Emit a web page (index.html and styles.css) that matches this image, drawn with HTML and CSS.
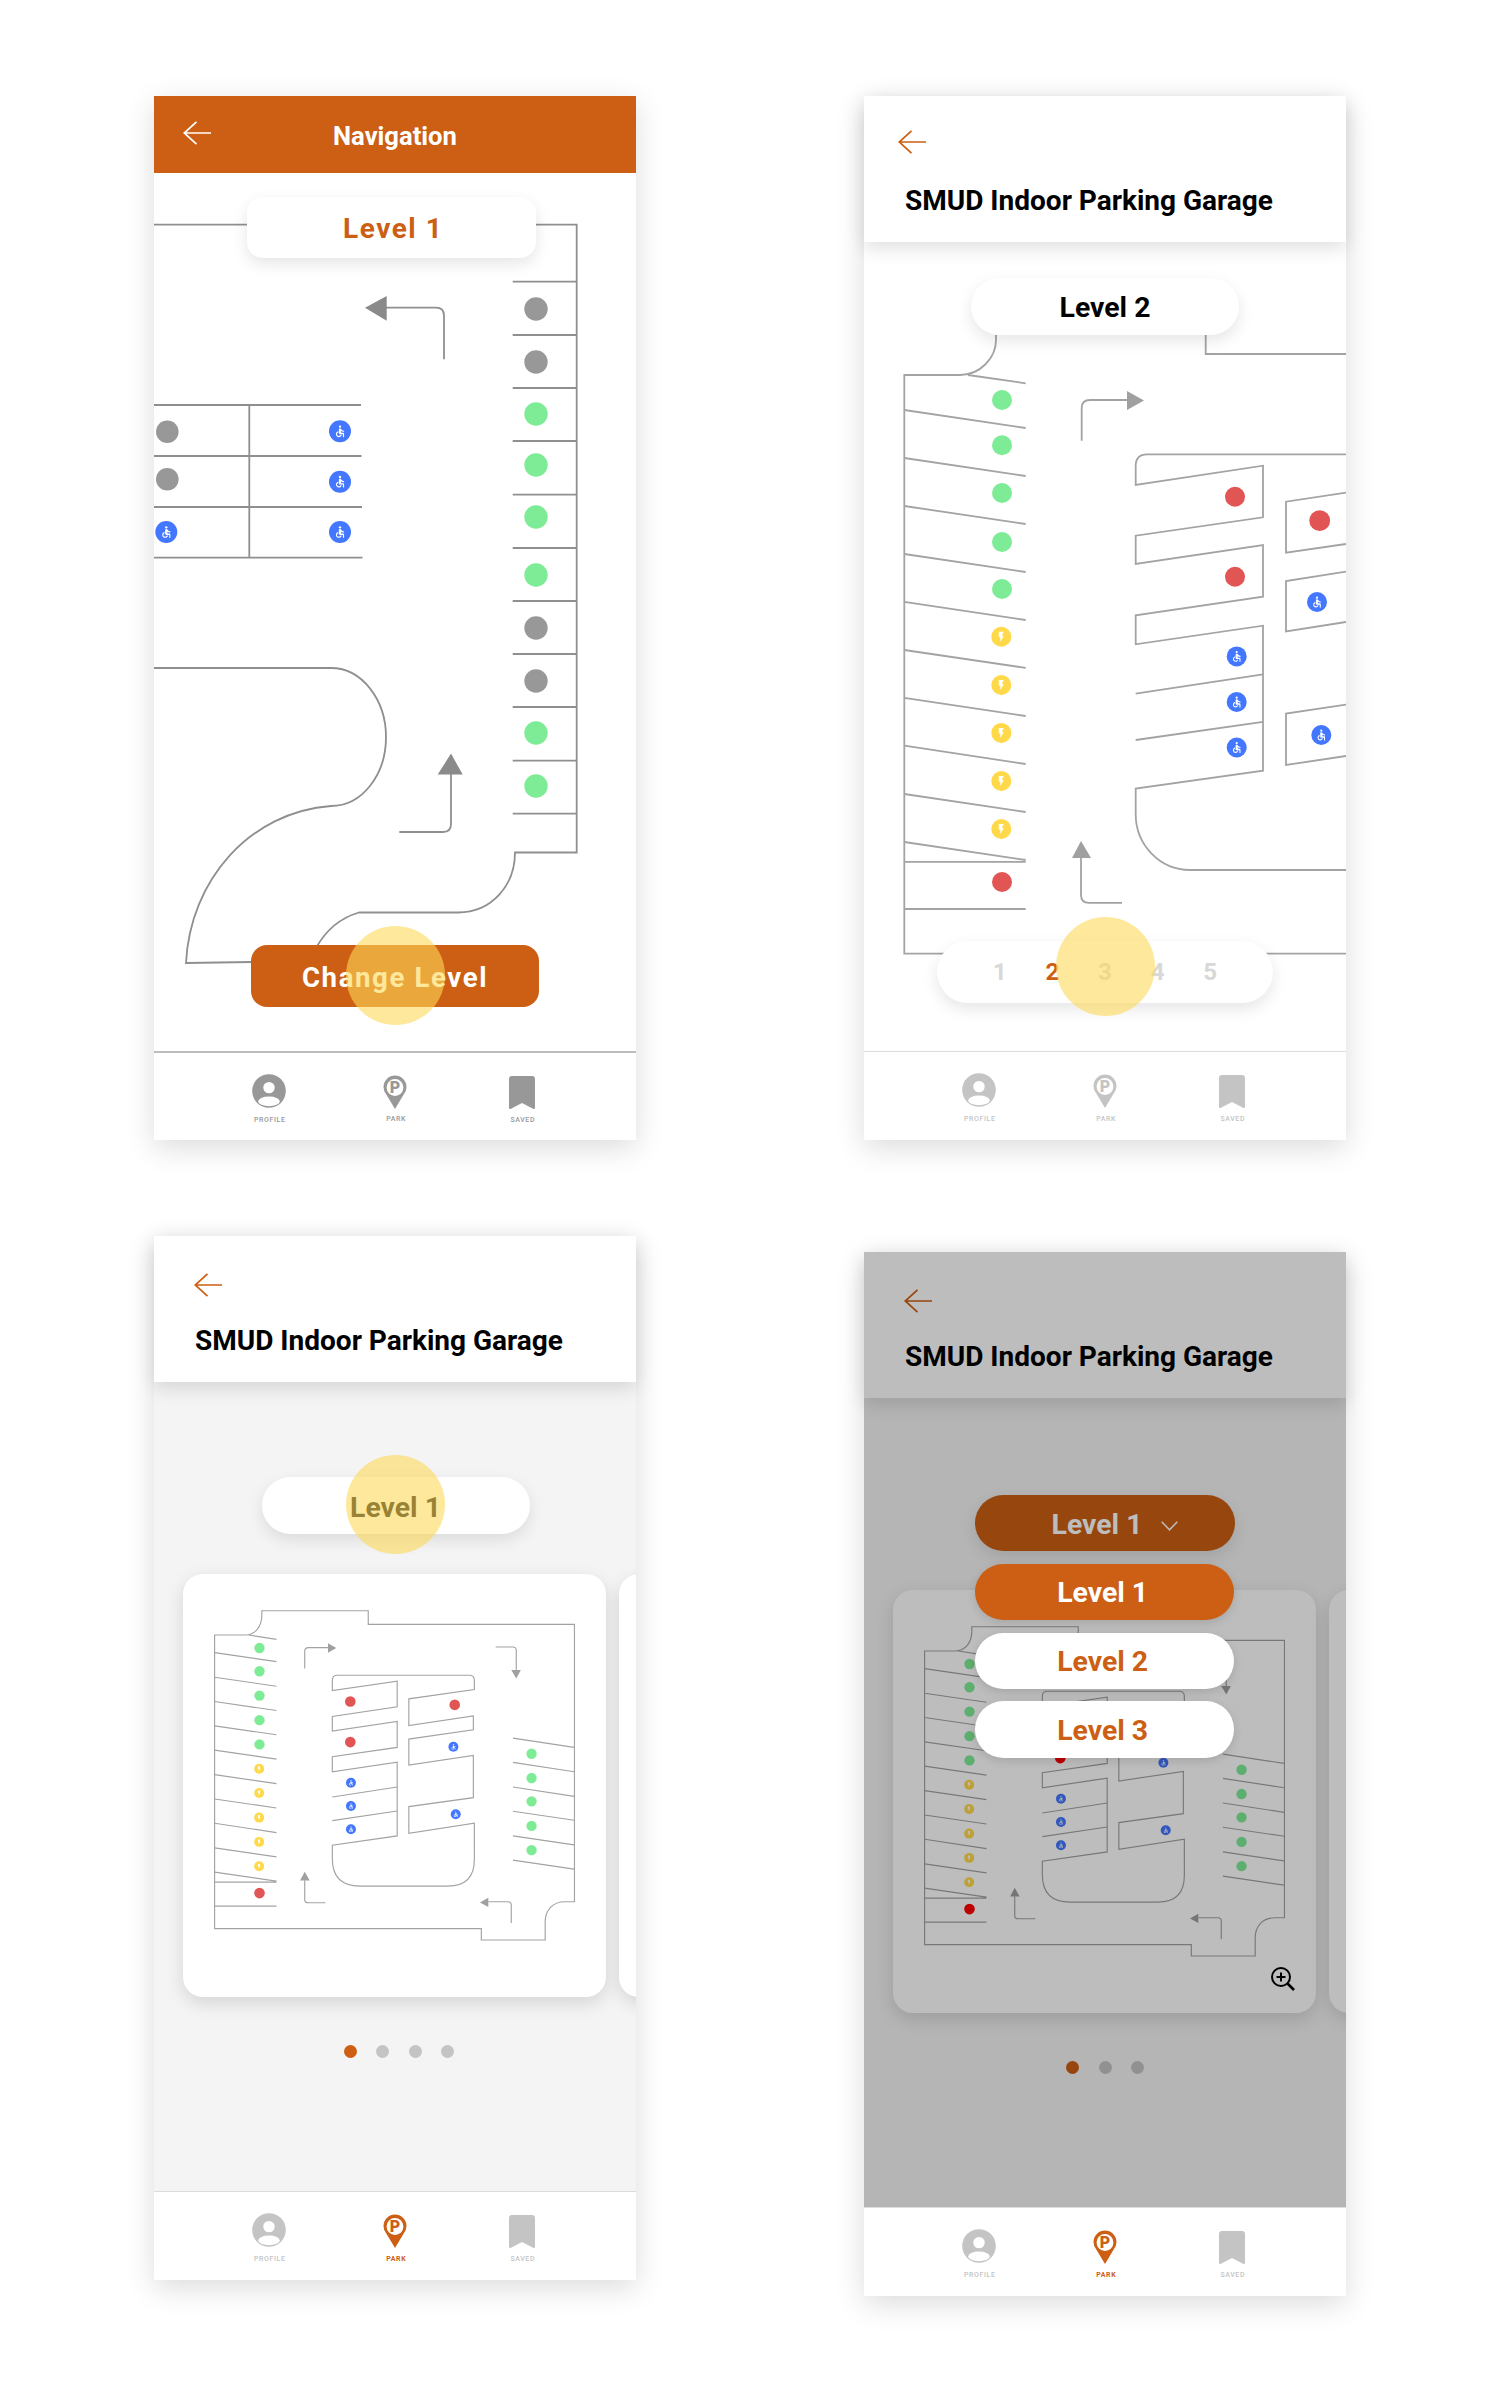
FILE: index.html
```html
<!DOCTYPE html>
<html lang="en">
<head>
<meta charset="utf-8">
<title>SMUD Indoor Parking Garage</title>
<link rel="stylesheet" href="styles.css">
</head>
<body>
<svg class="defs" width="0" height="0" aria-hidden="true">
  <defs>
    <symbol id="g-wc" viewBox="0 0 24 24">
      <circle cx="12" cy="4" r="2"/>
      <path d="M19 13v-2c-1.54.02-3.09-.75-4.07-1.83l-1.29-1.43c-.17-.19-.38-.34-.61-.45-.01 0-.01-.01-.02-.01H13c-.35-.2-.75-.3-1.19-.26C10.76 7.11 10 8.04 10 9.09V15c0 1.1.9 2 2 2h5v5h2v-5.5c0-1.1-.9-2-2-2h-3v-3.45c1.29 1.07 3.25 1.94 5 1.95zm-6.17 5c-.41 1.16-1.52 2-2.83 2-1.66 0-3-1.34-3-3 0-1.31.84-2.41 2-2.83V12.1c-2.28.46-4 2.48-4 4.9 0 2.76 2.24 5 5 5 2.42 0 4.44-1.72 4.9-4h-2.07z"/>
    </symbol>
    <symbol id="g-bolt" viewBox="0 0 24 24">
      <path d="M7 2v11h3v9l7-12h-4l4-8z"/>
    </symbol>
    <symbol id="i-back" viewBox="0 0 28 24">
      <path d="M13.5 .8 1.2 12l12.3 11.2M1.2 12H28" fill="none" stroke="currentColor" stroke-width="1.7"/>
    </symbol>
    <symbol id="i-profile" viewBox="0 0 36 36">
      <circle cx="18" cy="17" r="16.8" fill="currentColor"/>
      <circle cx="18" cy="13.6" r="5.7" fill="#fff"/>
      <ellipse cx="18" cy="27.4" rx="10.8" ry="4.8" fill="#fff"/>
    </symbol>
    <symbol id="i-saved" viewBox="0 0 26 36">
      <path d="M3 2h20q3 0 3 3v29q0 1.3-1.5 1L13 29 1.5 35Q0 35.3 0 34V5q0-3 3-3z" fill="currentColor"/>
    </symbol>

    <symbol id="mini-map" viewBox="38 12 1270 1270">
      <g class="m-line">
        <path d="M133 195V1078H935V1112H1127V1058C1127 1022 1150 997 1187 997H1215V163H595V122H275V135C275 170 255 195 225 195Z"/>
        <path d="M235 195 319 208M133 248 319 275M133 322 319 349M133 395 319 422M133 468 319 495M133 541 319 568M133 615 319 642M133 688 319 715M133 761 319 789M133 835 319 862M133 908 319 935M133 938H319M133 1010H319"/>
        <path d="M487 362V331Q487 316 502 316H899Q914 316 914 331V359L717 387V467L911 438V480L717 508V586L911 557V684L717 711V791L914 761V870Q914 950 834 950H570Q487 950 487 868V827L682 799V577L487 606V561L682 533V455L487 484V440L682 411V334Z"/>
        <path d="M487 682 682 652M487 753 682 724"/>
        <path d="M1030 505 1214 533M1030 578 1214 606M1030 652 1214 680M1030 725 1214 752M1030 799 1214 826M1030 872 1214 899"/>
        <path d="M404 296V244Q404 233 415 233H475M978 231H1030Q1040 231 1040 241V300M466 1000H414Q404 1000 404 990V932M1025 1061V1007Q1025 997 1015 997H956"/>
      </g>
      <path class="m-arrow" d="M474 220V248L499 234ZM1025 300H1054L1040 326ZM390 933H419L404 907ZM956 985V1013L931 999Z"/>
      <g class="d-green">
        <circle cx="268" cy="234" r="15.5"/><circle cx="268" cy="304" r="15.5"/><circle cx="268" cy="377" r="15.5"/><circle cx="268" cy="451" r="15.5"/><circle cx="268" cy="524" r="15.5"/>
        <circle cx="1086" cy="552" r="15.5"/><circle cx="1086" cy="625" r="15.5"/><circle cx="1086" cy="695" r="15.5"/><circle cx="1086" cy="769" r="15.5"/><circle cx="1086" cy="842" r="15.5"/>
      </g>
      <g class="d-red">
        <circle cx="268" cy="971" r="16"/><circle cx="541" cy="395" r="16"/><circle cx="541" cy="517" r="16"/><circle cx="855" cy="405" r="16"/>
      </g>
      <g class="d-yellow">
        <circle cx="267" cy="597" r="15"/><circle cx="267" cy="670" r="15"/><circle cx="267" cy="744" r="15"/><circle cx="267" cy="817" r="15"/><circle cx="267" cy="890" r="15"/>
      </g>
      <g class="d-glyph">
        <use href="#g-bolt" x="258" y="588" width="18" height="18"/><use href="#g-bolt" x="258" y="661" width="18" height="18"/><use href="#g-bolt" x="258" y="735" width="18" height="18"/><use href="#g-bolt" x="258" y="808" width="18" height="18"/><use href="#g-bolt" x="258" y="881" width="18" height="18"/>
      </g>
      <g class="d-blue">
        <circle cx="543" cy="639" r="15"/><circle cx="543" cy="709" r="15"/><circle cx="543" cy="779" r="15"/><circle cx="851" cy="531" r="15"/><circle cx="858" cy="734" r="15"/>
      </g>
      <g class="d-glyph">
        <use href="#g-wc" x="533" y="629" width="20" height="20"/><use href="#g-wc" x="533" y="699" width="20" height="20"/><use href="#g-wc" x="533" y="769" width="20" height="20"/><use href="#g-wc" x="841" y="521" width="20" height="20"/><use href="#g-wc" x="848" y="724" width="20" height="20"/>
      </g>
    </symbol>
  </defs>
</svg>

<main class="board">

  <!-- Screen 1: navigation -->
  <section class="phone">
    <div class="screen">
      <header class="head head-orange">
        <svg class="back back-one"><use href="#i-back"/></svg>
        <h1 class="head-title">Navigation</h1>
      </header>
      <div class="stage">
        <svg class="map" viewBox="154 173 482 878">
          <g class="m-line big">
            <path d="M154 224.7H576.7V852.5H515C515 885 492 912.5 458 912.5H359C340 918 326 930 316 948"/>
            <path d="M512.7 281.7H576.7M512.7 335H576.7M512.7 388H576.7M512.7 441H576.7M512.7 494.7H576.7M512.7 548H576.7M512.7 601H576.7M512.7 654H576.7M512.7 707H576.7M512.7 760.7H576.7M512.7 813.6H576.7"/>
            <path d="M154 405H361M154 456H361.5M154 507H362M154 557.7H362.5M249.3 405V557.7"/>
            <path d="M154 668H331C362 668 386 700 386 737C386 775 362 806 331 806C250 812 190 880 186 963L252 962"/>
            <path d="M444 359.3V315.7Q444 307.7 436 307.7H386M399.3 832H443Q451 832 451 824V774"/>
          </g>
          <path class="m-arrow dark" d="M365 307.7 386.7 296V320.7ZM451 753.6 437.7 774.5H462.7Z"/>
          <g class="d-gray">
            <circle cx="536" cy="309" r="11.7"/><circle cx="536" cy="362" r="11.7"/><circle cx="536" cy="628" r="11.7"/><circle cx="536" cy="681" r="11.7"/>
            <circle cx="167.3" cy="431.7" r="11.3"/><circle cx="167.3" cy="479.3" r="11.3"/>
          </g>
          <g class="d-green">
            <circle cx="536" cy="414" r="11.7"/><circle cx="536" cy="465" r="11.7"/><circle cx="536" cy="517" r="11.7"/><circle cx="536" cy="575" r="11.7"/><circle cx="536" cy="733" r="11.7"/><circle cx="536" cy="786" r="11.7"/>
          </g>
          <g class="d-blue">
            <circle cx="340" cy="431.3" r="11"/><circle cx="340" cy="481.7" r="11"/><circle cx="340" cy="532" r="11"/><circle cx="166.3" cy="532" r="11"/>
          </g>
          <g class="d-glyph">
            <use href="#g-wc" x="333" y="424.3" width="14" height="14"/><use href="#g-wc" x="333" y="474.7" width="14" height="14"/><use href="#g-wc" x="333" y="525" width="14" height="14"/><use href="#g-wc" x="159.3" y="525" width="14" height="14"/>
          </g>
        </svg>
        <div class="chip chip-level-one">Level 1</div>
        <button class="cta">Change Level</button>
        <span class="tap tap-cta"></span>
      </div>
    </div>
    <nav class="tabs tabs-dark">
      <div class="tab"><svg class="tab-i tab-profile"><use href="#i-profile"/></svg><span class="tab-l">PROFILE</span></div>
      <div class="tab">
        <svg class="tab-i tab-pin" viewBox="0 0 24 36"><path class="pin-o" d="M12 35 3.3 20.5A11.5 11.5 0 1 1 20.7 20.5Z"/><circle class="pin-c" cx="12" cy="13.5" r="8.4"/><text class="pin-p" x="12" y="19">P</text></svg>
        <span class="tab-l tab-l-up">PARK</span>
      </div>
      <div class="tab"><svg class="tab-i tab-saved"><use href="#i-saved"/></svg><span class="tab-l">SAVED</span></div>
    </nav>
  </section>

  <!-- Screen 2: level map with number picker -->
  <section class="phone">
    <div class="screen">
      <header class="head head-white">
        <svg class="back back-two"><use href="#i-back"/></svg>
        <h1 class="head-title">SMUD Indoor Parking Garage</h1>
      </header>
      <div class="stage">
        <svg class="map" viewBox="864 242 482 809">
          <g class="m-line big light">
            <path d="M996 335V340C996 358 980 375 960 375H904.3V953.6H1346M1205.7 335V354H1346"/>
            <path d="M968 375 1025.7 383.3M904.3 410 1025.7 428M904.3 458 1025.7 476M904.3 506 1025.7 524M904.3 554 1025.7 572M904.3 601.8 1025.7 620M904.3 650 1025.7 667.9M904.3 697.9 1025.7 716M904.3 745.7 1025.7 764M904.3 794 1025.7 812M904.3 842 1025.7 860M904.3 861.8H1025.7M904.3 909H1025.7"/>
            <path d="M1346 454.3H1147Q1135.7 454.3 1135.7 466V485L1263 465.7V517.3L1135.7 535.7V564L1263 545V596.7L1135.7 615.4V644.3L1263 625.7V770.7L1135.7 788.6V814C1135.7 845 1160 870 1190 870H1346"/>
            <path d="M1135.7 693.6 1263 674.3M1135.7 740 1263 721.8"/>
            <path d="M1346 492.7 1286 501.7V552.7L1346 544M1346 571.7 1286 581V631.4L1346 622M1346 704.6 1286 713.6V765L1346 756"/>
            <path d="M1081.7 440.7V408Q1081.7 400 1090 400H1128M1122 902.9H1089Q1081 902.9 1081 895V857"/>
          </g>
          <path class="m-arrow" d="M1127 391V410L1144 400.6ZM1081 841 1072 857.9H1091Z"/>
          <g class="d-green">
            <circle cx="1002" cy="400" r="10"/><circle cx="1002" cy="445.3" r="10"/><circle cx="1002" cy="493" r="10"/><circle cx="1002" cy="542" r="10"/><circle cx="1002" cy="589" r="10"/>
          </g>
          <g class="d-yellow">
            <circle cx="1001.3" cy="636.8" r="10"/><circle cx="1001.3" cy="685" r="10"/><circle cx="1001.3" cy="732.9" r="10"/><circle cx="1001.3" cy="781" r="10"/><circle cx="1001.3" cy="829" r="10"/>
          </g>
          <g class="d-glyph">
            <use href="#g-bolt" x="995.3" y="630.8" width="12" height="12"/><use href="#g-bolt" x="995.3" y="679" width="12" height="12"/><use href="#g-bolt" x="995.3" y="726.9" width="12" height="12"/><use href="#g-bolt" x="995.3" y="775" width="12" height="12"/><use href="#g-bolt" x="995.3" y="823" width="12" height="12"/>
          </g>
          <g class="d-red">
            <circle cx="1002" cy="882" r="10"/><circle cx="1235" cy="496.7" r="10"/><circle cx="1235" cy="576.7" r="10"/><circle cx="1319.7" cy="520.7" r="10.4"/>
          </g>
          <g class="d-blue">
            <circle cx="1236.7" cy="656.4" r="10"/><circle cx="1236.7" cy="702" r="10"/><circle cx="1236.7" cy="747.5" r="10"/><circle cx="1317" cy="602" r="10"/><circle cx="1321.3" cy="735" r="10"/>
          </g>
          <g class="d-glyph">
            <use href="#g-wc" x="1230.2" y="649.9" width="13" height="13"/><use href="#g-wc" x="1230.2" y="695.5" width="13" height="13"/><use href="#g-wc" x="1230.2" y="741" width="13" height="13"/><use href="#g-wc" x="1310.5" y="595.5" width="13" height="13"/><use href="#g-wc" x="1314.8" y="728.5" width="13" height="13"/>
          </g>
        </svg>
        <div class="chip chip-level-two">Level 2</div>
        <div class="picker">
          <span>1</span><span class="on">2</span><span>3</span><span>4</span><span>5</span>
        </div>
        <span class="tap tap-picker"></span>
      </div>
    </div>
    <nav class="tabs">
      <div class="tab"><svg class="tab-i tab-profile"><use href="#i-profile"/></svg><span class="tab-l">PROFILE</span></div>
      <div class="tab">
        <svg class="tab-i tab-pin" viewBox="0 0 24 36"><path class="pin-o" d="M12 35 3.3 20.5A11.5 11.5 0 1 1 20.7 20.5Z"/><circle class="pin-c" cx="12" cy="13.5" r="8.4"/><text class="pin-p" x="12" y="19">P</text></svg>
        <span class="tab-l tab-l-up">PARK</span>
      </div>
      <div class="tab"><svg class="tab-i tab-saved"><use href="#i-saved"/></svg><span class="tab-l">SAVED</span></div>
    </nav>
  </section>

  <!-- Screen 3: level carousel -->
  <section class="phone">
    <div class="screen">
      <header class="head head-white">
        <svg class="back back-three"><use href="#i-back"/></svg>
        <h1 class="head-title">SMUD Indoor Parking Garage</h1>
      </header>
      <div class="stage stage-grey">
        <div class="chip chip-carousel">Level 1</div>
        <div class="cards">
          <div class="card"><svg class="mini"><use href="#mini-map"/></svg></div>
          <div class="card"></div>
        </div>
        <div class="dots dots-wide">
          <i class="on"></i><i></i><i></i><i></i>
        </div>
        <span class="tap tap-chip"></span>
      </div>
    </div>
    <nav class="tabs">
      <div class="tab"><svg class="tab-i tab-profile"><use href="#i-profile"/></svg><span class="tab-l">PROFILE</span></div>
      <div class="tab tab-active">
        <svg class="tab-i tab-pin" viewBox="0 0 24 36"><path class="pin-o" d="M12 35 3.3 20.5A11.5 11.5 0 1 1 20.7 20.5Z"/><circle class="pin-c" cx="12" cy="13.5" r="8.4"/><text class="pin-p" x="12" y="19">P</text></svg>
        <span class="tab-l tab-l-up">PARK</span>
      </div>
      <div class="tab"><svg class="tab-i tab-saved"><use href="#i-saved"/></svg><span class="tab-l">SAVED</span></div>
    </nav>
  </section>

  <!-- Screen 4: open level menu -->
  <section class="phone phone-low">
    <div class="screen">
      <header class="head head-white">
        <svg class="back back-three"><use href="#i-back"/></svg>
        <h1 class="head-title">SMUD Indoor Parking Garage</h1>
      </header>
      <div class="stage stage-grey">
        <div class="chip chip-trigger">
          <span>Level 1</span>
          <svg class="chev" viewBox="0 0 17 10"><path d="M.7.7 8.5 8.8 16.3.7" fill="none" stroke="currentColor" stroke-width="1.5"/></svg>
        </div>
        <div class="cards">
          <div class="card card-dim">
            <svg class="mini"><use href="#mini-map"/></svg>
            <svg class="zoom-i" viewBox="0 0 24 24">
              <circle cx="10" cy="10" r="9" fill="none" stroke="#000" stroke-width="2"/>
              <path d="M10 5.5v9M5.5 10h9" fill="none" stroke="#000" stroke-width="2"/>
              <path d="M16.5 16.5 23 23" fill="none" stroke="#000" stroke-width="2.6"/>
            </svg>
          </div>
          <div class="card"></div>
        </div>
        <div class="dots">
          <i class="on"></i><i></i><i></i>
        </div>
      </div>
      <div class="scrim"></div>
      <ul class="menu">
        <li class="menu-i on">Level 1</li>
        <li class="menu-i">Level 2</li>
        <li class="menu-i">Level 3</li>
      </ul>
    </div>
    <nav class="tabs">
      <div class="tab"><svg class="tab-i tab-profile"><use href="#i-profile"/></svg><span class="tab-l">PROFILE</span></div>
      <div class="tab tab-active">
        <svg class="tab-i tab-pin" viewBox="0 0 24 36"><path class="pin-o" d="M12 35 3.3 20.5A11.5 11.5 0 1 1 20.7 20.5Z"/><circle class="pin-c" cx="12" cy="13.5" r="8.4"/><text class="pin-p" x="12" y="19">P</text></svg>
        <span class="tab-l tab-l-up">PARK</span>
      </div>
      <div class="tab"><svg class="tab-i tab-saved"><use href="#i-saved"/></svg><span class="tab-l">SAVED</span></div>
    </nav>
  </section>

</main>
</body>
</html>
```
FILE: styles.css
```css
* { box-sizing: border-box; }

html, body { margin: 0; padding: 0; background: #fff; }

body {
  height: 2393px;
  overflow: hidden;
  font-family: Roboto, "Liberation Sans", sans-serif;
  --orange: #cc5f13;
  --red: #e25555;
}

.defs { position: absolute; }

.board {
  display: grid;
  grid-template-columns: 482px 482px;
  column-gap: 228px;
  row-gap: 96px;
  align-items: start;
  padding: 96px 0 0 154px;
}

.phone {
  width: 482px;
  height: 1044px;
  display: flex;
  flex-direction: column;
  background: #fff;
  box-shadow: 0 8px 28px rgba(0, 0, 0, .14);
}

.phone-low { margin-top: 16px; --red: #ff0000; }

.screen {
  flex: 1;
  min-height: 0;
  display: flex;
  flex-direction: column;
  position: relative;
}

/* header */
.head { flex: none; position: relative; z-index: 2; }

.head-orange {
  height: 77px;
  background: var(--orange);
  color: #fff;
  display: flex;
  align-items: center;
  justify-content: center;
}

.head-orange .head-title { color: #fff; font-size: 25.6px; padding-top: 3px; }

.head-white {
  height: 146px;
  background: #fff;
  color: var(--orange);
  padding: 34px 0 0 41px;
  box-shadow: 0 6px 18px rgba(0, 0, 0, .13);
}

.head-title {
  margin: 0;
  font-size: 28px;
  line-height: 34px;
  font-weight: 700;
  color: #000;
}

.back { display: block; width: 28px; height: 24px; }
.back-one { position: absolute; left: 29.3px; top: 25px; }
.back-two { margin: 0 0 30px -7.3px; }
.back-three { margin: 3px 0 27px -1px; }

/* stage */
.stage { flex: 1; min-height: 0; position: relative; overflow: hidden; }
.stage-grey {
  background: #f4f4f4;
  display: flex;
  flex-direction: column;
  align-items: center;
  padding-top: 95px;
}

.map { display: block; width: 100%; height: 100%; }

.m-line { fill: none; stroke: #a3a3a3; stroke-width: 3.5; }
.m-line.big { stroke: #8f8f8f; stroke-width: 1.8; }
.m-line.big.light { stroke: #a3a3a3; }
.m-arrow { fill: #a0a0a0; }
.m-arrow.dark { fill: #8a8a8a; }
.d-gray { fill: #989898; }
.d-green { fill: #7eec96; }
.d-red { fill: var(--red); }
.d-yellow { fill: #ffd94a; }
.d-blue { fill: #4477ff; }
.d-glyph { fill: #fff; }

/* pills */
.chip {
  font-size: 28.4px;
  font-weight: 700;
  color: #000;
  background: #fff;
  display: flex;
  align-items: center;
  justify-content: center;
  padding-top: 2px;
  box-shadow: 0 6px 16px rgba(0, 0, 0, .1);
}

.chip-level-one {
  position: absolute;
  left: 93.3px;
  top: 23.7px;
  width: 288.7px;
  height: 61.6px;
  border-radius: 16px;
  color: var(--orange);
  font-size: 28px;
  letter-spacing: 1.5px;
  padding-left: 3px;
}

.chip-level-two {
  position: absolute;
  left: 107px;
  top: 36.3px;
  width: 268px;
  height: 56.7px;
  border-radius: 28.5px;
}

.chip-carousel {
  flex: none;
  width: 268px;
  height: 57px;
  border-radius: 28.5px;
  margin-left: 1px;
  padding-top: 3px;
}

.chip-trigger {
  flex: none;
  width: 259.3px;
  height: 56.4px;
  border-radius: 28.2px;
  margin: 2px 0 -1.4px 0;
  background: var(--orange);
  color: #fff;
  gap: 19px;
  padding-left: 20px;
}

.chev { width: 17px; height: 10px; margin-top: 4px; }

.cta {
  position: absolute;
  left: 96.7px;
  top: 772.4px;
  width: 288.6px;
  height: 61.6px;
  border: 0;
  border-radius: 16px;
  background: var(--orange);
  color: #fff;
  font-family: inherit;
  font-size: 27.6px;
  font-weight: 700;
  letter-spacing: 1.6px;
  padding: 3px 0 0;
}

.picker {
  position: absolute;
  left: 73.3px;
  top: 699px;
  width: 335.4px;
  height: 61.5px;
  border-radius: 31px;
  background: #fff;
  box-shadow: 0 6px 16px rgba(0, 0, 0, .1);
  display: flex;
  justify-content: center;
  align-items: center;
  font-size: 24px;
  font-weight: 700;
  color: #d8d8d8;
}

.picker span { width: 52.6px; text-align: center; }
.picker .on { color: var(--orange); }

.tap {
  position: absolute;
  width: 99px;
  height: 99px;
  border-radius: 50%;
  background: rgba(253, 217, 88, .6);
  pointer-events: none;
}
.tap-cta { left: 191.5px; top: 752.5px; }
.tap-picker { left: 191.5px; top: 675.3px; }
.tap-chip { left: 191.5px; top: 72.8px; }

/* cards */
.cards {
  flex: none;
  align-self: stretch;
  display: flex;
  gap: 13.3px;
  padding-left: 29.3px;
  margin-top: 40px;
}

.card {
  flex: none;
  position: relative;
  width: 422.4px;
  height: 422.7px;
  border-radius: 20px;
  background: #fff;
  box-shadow: 0 6px 18px rgba(0, 0, 0, .13);
}

.mini { display: block; width: 100%; height: 100%; }

.zoom-i {
  position: absolute;
  left: 378px;
  top: 377px;
  width: 24px;
  height: 24px;
}

.dots {
  flex: none;
  display: flex;
  gap: 19.6px;
  margin-top: 48px;
}

.dots-wide { margin-left: 8px; }

.dots i {
  display: block;
  width: 13px;
  height: 13px;
  border-radius: 50%;
  background: #c4c4c4;
}

.dots .on { background: var(--orange); }

/* scrim and menu */
.scrim {
  position: absolute;
  inset: 0;
  z-index: 3;
  background: rgba(0, 0, 0, .26);
}

.menu {
  position: absolute;
  z-index: 4;
  left: 111px;
  top: 312px;
  width: 259.3px;
  margin: 0;
  padding: 0;
  list-style: none;
  display: flex;
  flex-direction: column;
  gap: 12.4px;
}

.menu-i {
  height: 56.3px;
  border-radius: 28.2px;
  background: #fff;
  color: var(--orange);
  font-size: 28.4px;
  font-weight: 700;
  display: flex;
  align-items: center;
  justify-content: center;
  padding: 1px 4px 0 0;
  box-shadow: 0 3px 10px rgba(0, 0, 0, .12);
}

.menu-i.on { background: var(--orange); color: #fff; }

/* tab bar */
.tabs {
  flex: none;
  height: 89px;
  background: #fff;
  border-top: 1.5px solid #dcdcdc;
  padding-top: 21px;
  display: flex;
  justify-content: center;
  color: #c4c4c4;
  position: relative;
  z-index: 1;
}

.tabs-dark { color: #989898; border-top: 2px solid #bdbdbd; padding-top: 20.5px; }

.tab {
  width: 126.5px;
  display: flex;
  flex-direction: column;
  align-items: center;
}

.tab-i { display: block; height: 36px; }
.tab-profile { width: 36px; }
.tab-pin { width: 24px; }
.tab-saved { width: 26px; }

.tab-l {
  margin: 5px 0 0 2.5px;
  font-size: 7px;
  line-height: 10px;
  font-weight: 500;
  letter-spacing: .6px;
  color: inherit;
}
.tab-l-up { margin-top: 4.5px; }

.tab-active { color: var(--orange); }
.tab-active .tab-l { font-weight: 700; }

.pin-o { fill: currentColor; }
.pin-c { fill: #fff; }
.pin-p {
  fill: currentColor;
  font-size: 16px;
  font-weight: 900;
  text-anchor: middle;
}
```
